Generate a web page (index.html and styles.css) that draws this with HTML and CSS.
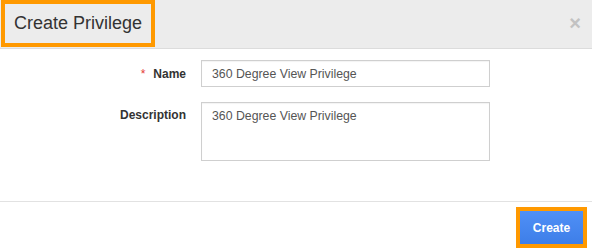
FILE: index.html
```html
<!DOCTYPE html>
<html>
<head>
<meta charset="utf-8">
<link rel="stylesheet" href="styles.css">
</head>
<body>
<div class="modal">
  <div class="modal-header">
    <div class="title-box"><span class="title">Create Privilege</span></div>
    <span class="close">&times;</span>
  </div>
  <div class="modal-body">
    <div class="row row-name">
      <label class="label"><span class="req">*</span>Name</label>
      <div class="input">360 Degree View Privilege</div>
    </div>
    <div class="row row-desc">
      <label class="label label-top">Description</label>
      <div class="input textarea">360 Degree View Privilege</div>
    </div>
  </div>
  <div class="modal-footer">
    <div class="btn-box"><button class="btn">Create</button></div>
  </div>
</div>
</body>
</html>
```
FILE: styles.css
```css
html, body {
  margin: 0;
  padding: 0;
  background: #fff;
}
body {
  font-family: "Liberation Sans", Arial, sans-serif;
  width: 592px;
  height: 251px;
  overflow: hidden;
}
.modal {
  display: flex;
  flex-direction: column;
  width: 592px;
}
.modal-header {
  height: 48px;
  background: #ececec;
  border-bottom: 1px solid #dcdcdc;
  display: flex;
  align-items: flex-start;
  justify-content: space-between;
  padding-left: 1px;
  box-sizing: content-box;
}
.title-box {
  box-sizing: border-box;
  height: 47px;
  width: 154px;
  border: 4px solid #ff9900;
  display: flex;
  align-items: center;
  padding-left: 9px;
  padding-bottom: 1px;
}
.title {
  font-size: 18px;
  color: #333;
}
.close {
  font-size: 20px;
  font-weight: bold;
  color: #c2c2c2;
  line-height: 20px;
  margin-top: 13px;
  margin-right: 11px;
}
.modal-body {
  height: 152px;
  padding-top: 11px;
  box-sizing: border-box;
  display: flex;
  flex-direction: column;
  gap: 15px;
}
.row {
  display: flex;
  align-items: center;
  gap: 15px;
}
.row-desc {
  align-items: flex-start;
}
.label {
  width: 186px;
  text-align: right;
  font-size: 12px;
  font-weight: bold;
  color: #333;
}
.label-top {
  padding-top: 6px;
}
.req {
  color: #e53935;
  font-weight: normal;
  margin-right: 8px;
}
.input {
  box-sizing: border-box;
  width: 289px;
  height: 27px;
  border: 1px solid #cfcfcf;
  box-shadow: inset 0 1px 1px rgba(0,0,0,0.05);
  font-size: 12.3px;
  color: #555;
  padding: 0 10px;
  display: flex;
  align-items: center;
}
.textarea {
  height: 59px;
  align-items: flex-start;
  padding-top: 6px;
}
.modal-footer {
  border-top: 1px solid #e2e2e2;
  height: 50px;
  display: flex;
  justify-content: flex-end;
  align-items: flex-start;
  padding-top: 5px;
  padding-right: 5px;
  box-sizing: border-box;
}
.btn-box {
  border: 4px solid #ff9900;
  display: flex;
}
.btn {
  width: 63px;
  height: 33px;
  border: 0;
  background: linear-gradient(#4f90f7, #3e7ee8);
  color: #fff;
  font-family: "Liberation Sans", Arial, sans-serif;
  font-size: 12px;
  font-weight: bold;
  padding: 0;
  display: block;
}
```
